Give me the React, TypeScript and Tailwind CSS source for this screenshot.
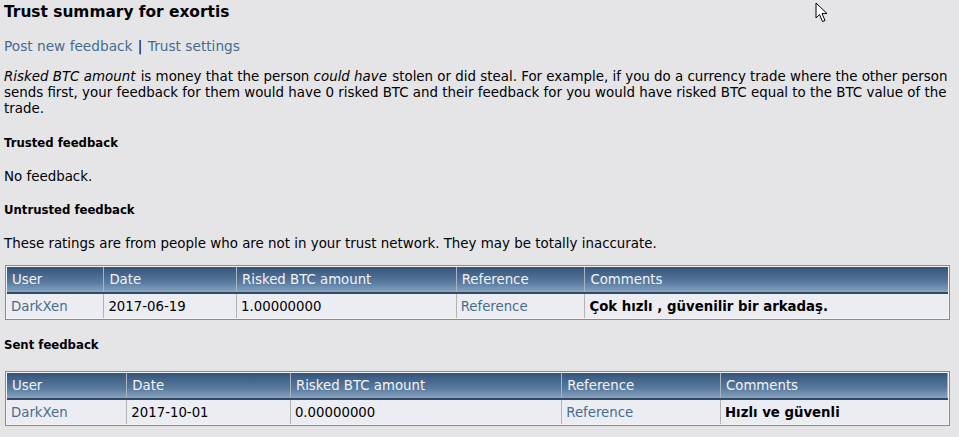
import React from "react";

type Row = { user: string; date: string; risked: string; comment: string };

const font = "font-['DejaVu_Sans','Verdana',sans-serif]";

const FeedbackTable = ({ widths, row }: { widths: number[]; row: Row }) => {
    const heads = ["User", "Date", "Risked BTC amount", "Reference", "Comments"];
    return <div className="ml-[5px] mr-[9px] border border-[#8a8a8a] bg-[#f4f4f6] p-px">
        <table className="w-full border-collapse text-[13.3px]">
            <colgroup>
                {widths.map((w, i) => <col key={i} style={{ width: w }} />)}
            </colgroup>
            <thead>
                <tr className="bg-[linear-gradient(to_bottom,#345579,#5a7ba0_60%,#8ea7c1)] text-[#f2f4f8]">
                    {heads.map((h, i) => (
                        <th key={h} className={"h-[26px] border-b-2 border-b-[#2e4a68] px-[5px] pt-[1px] text-left font-normal " + (i > 0 ? "border-l border-l-[#a9b4c0]" : "")}>{h}</th>
                    ))}
                </tr>
            </thead>
            <tbody>
                <tr className="bg-[#ecedf3]">
                    <td className="h-[25px] px-[4px] pt-[2px] text-[#476c8e]">{row.user}</td>
                    <td className="border-l border-[#b3b3b3] px-[4px] pt-[2px]">{row.date}</td>
                    <td className="border-l border-[#b3b3b3] px-[4px] pt-[2px]">{row.risked}</td>
                    <td className="border-l border-[#b3b3b3] px-[4px] pt-[2px] text-[#476c8e]">Reference</td>
                    <td className="border-l border-[#b3b3b3] px-[4px] pt-[2px] font-bold">{row.comment}</td>
                </tr>
            </tbody>
        </table>
    </div>
}

const App = () => {
    return <div className={"relative min-h-[437px] bg-[#e5e5e8] pt-[2px] text-[13.4px] leading-[16px] text-black " + font}>
        <div className="px-[4px]">
            <h1 className="text-[15.4px] font-bold leading-[20px]">Trust summary for exortis</h1>
            <div className="mt-[16px] text-[13.7px] text-[#476c8e]">
                Post new feedback <span className="mx-[1px] text-black">|</span> Trust settings
            </div>
            <p className="mt-[15px] leading-[16px]">
                <i className="pr-[1px]">Risked BTC amount</i> is money that the person <i className="pr-[1px]">could have</i> stolen or did steal. For example, if you do a currency trade where the other person sends first, your feedback for them would have 0 risked BTC and their feedback for you would have risked BTC equal to the BTC value of the trade.
            </p>
            <div className="mt-[18px] text-[11.7px] font-bold">Trusted feedback</div>
            <p className="mt-[18px]">No feedback.</p>
            <div className="mt-[17px] text-[11.7px] font-bold">Untrusted feedback</div>
            <p className="mt-[18px]">These ratings are from people who are not in your trust network. They may be totally inaccurate.</p>
        </div>
        <div className="mt-[13px]">
            <FeedbackTable widths={[97, 133, 220, 129, 364]} row={{ user: "DarkXen", date: "2017-06-19", risked: "1.00000000", comment: "Çok hızlı , güvenilir bir arkadaş." }} />
        </div>
        <div className="mt-[17px] px-[4px] text-[11.7px] font-bold">Sent feedback</div>
        <div className="mt-[18px]">
            <FeedbackTable widths={[120, 164, 272, 159, 228]} row={{ user: "DarkXen", date: "2017-10-01", risked: "0.00000000", comment: "Hızlı ve güvenli" }} />
        </div>
        <svg className="absolute left-[815px] top-[2px]" width="14" height="21" viewBox="0 0 14 21">
            <path d="M1 1 L1 16 L4.5 12.5 L7.5 19.5 L10 18.5 L7 11.5 L12 11.5 Z" fill="#fff" stroke="#000" strokeWidth="1" strokeLinejoin="round" />
        </svg>
    </div>
}

export default App;
